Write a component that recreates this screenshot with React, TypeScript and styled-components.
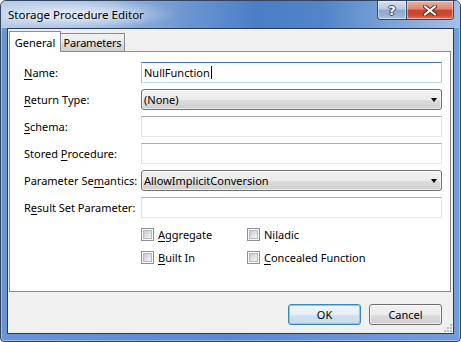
import React from 'react';
import styled, { createGlobalStyle } from 'styled-components';

const GlobalStyle = createGlobalStyle`
  html, body {
    margin: 0;
    padding: 0;
    background: #ffffff;
  }
  body {
    font-family: "Noto Sans", "Open Sans", sans-serif;
    font-size: 11px;
    color: #000000;
  }
  * {
    box-sizing: border-box;
  }
`;

const Window = styled.div`
  width: 461px;
  height: 342px;
  display: flex;
  flex-direction: column;
  border: 1px solid #34445e;
  border-radius: 6px 6px 4px 4px;
  overflow: hidden;
  background: linear-gradient(90deg, #6795d5 0%, #5a8bd1 50%, #739edb 100%);
  box-shadow: inset 0 0 0 1px rgba(255, 255, 255, 0.35);
`;

const TitleBar = styled.div`
  height: 27px;
  flex-shrink: 0;
  display: flex;
  align-items: flex-start;
  padding: 0 6px 0 7px;
  background:
    radial-gradient(ellipse 105px 15px at 72px 13px, rgba(255, 255, 255, 0.7), rgba(255, 255, 255, 0) 100%),
    linear-gradient(90deg, #b8cce8 0%, #a0bbe0 22%, #6893d0 42%, #4b7ec6 56%, #5384c8 70%, #7fa5da 86%, #a3c0e6 100%);
`;

const Caption = styled.span`
  margin-top: 6px;
  font-size: 11.5px;
  color: #000000;
  text-shadow: 0 0 6px rgba(255, 255, 255, 0.9);
`;

const CaptionButtons = styled.div`
  margin-left: auto;
  display: flex;
  height: 19px;
  border: 1px solid #3a4862;
  border-top: none;
  border-radius: 0 0 4px 4px;
  overflow: hidden;
`;

const CaptionButton = styled.div<{ $close?: boolean }>`
  width: ${({ $close }) => ($close ? '47px' : '28px')};
  height: 100%;
  display: flex;
  align-items: center;
  justify-content: center;
  border-left: ${({ $close }) => ($close ? '1px solid #3a4862' : 'none')};
  background: ${({ $close }) =>
    $close
      ? 'linear-gradient(180deg, #eab0a3 0%, #dd8471 45%, #c9432c 52%, #cc4a33 80%, #e07a64 100%)'
      : 'linear-gradient(180deg, #d6e1ef 0%, #b7c9e1 45%, #8ea7cb 52%, #98b0d2 80%, #b2c7e3 100%)'};
  box-shadow: inset 0 0 0 1px rgba(255, 255, 255, 0.45);
`;

const HelpGlyph = styled.span`
  font-family: "DejaVu Sans", sans-serif;
  font-weight: bold;
  font-size: 13px;
  color: #ffffff;
  line-height: 1;
  text-shadow: 0 0 1px #27354f, 1px 0 0 #3b4b68, -1px 0 0 #3b4b68, 0 1px 0 #3b4b68, 0 -1px 0 #3b4b68;
`;

const Client = styled.div`
  flex: 1;
  display: flex;
  flex-direction: column;
  margin: 0 6px 7px 6px;
  border: 1px solid #2a3a55;
  background: #f0f0f0;
  padding: 1px 2px 0 1px;
  position: relative;
`;

const TabStrip = styled.div`
  height: 21px;
  display: flex;
  align-items: flex-end;
`;

const Tab = styled.div<{ $active?: boolean; $width: number }>`
  width: ${({ $width }) => $width}px;
  height: ${({ $active }) => ($active ? '21px' : '18px')};
  margin-bottom: ${({ $active }) => ($active ? '-1px' : '0')};
  margin-left: ${({ $active }) => ($active ? '0' : '-1px')};
  padding-top: ${({ $active }) => ($active ? '1px' : '0')};
  border: 1px solid #898c95;
  border-bottom: none;
  display: flex;
  align-items: center;
  justify-content: center;
  white-space: nowrap;
  letter-spacing: ${({ $active }) => ($active ? '0' : '-0.2px')};
  background: ${({ $active }) =>
    $active ? '#ffffff' : 'linear-gradient(180deg, #f2f2f2 0%, #ebebeb 50%, #dddddd 51%, #cfcfcf 100%)'};
  position: relative;
  z-index: ${({ $active }) => ($active ? 2 : 1)};
`;

const Panel = styled.div`
  height: 241px;
  border: 1px solid #898c95;
  background: #ffffff;
  padding: 10px 8px 0 14px;
  position: relative;
  z-index: 1;
`;

const FormGrid = styled.div`
  display: grid;
  grid-template-columns: 117px 1fr;
  grid-auto-rows: 21px;
  row-gap: 6px;
  align-items: center;
`;

const Label = styled.label`
  white-space: nowrap;
`;

const Key = styled.span`
  text-decoration: underline;
  text-underline-offset: 2px;
`;

const Field = styled.div<{ $focused?: boolean }>`
  height: 21px;
  display: flex;
  align-items: center;
  padding-left: 2px;
  border: 1px solid;
  border-color: ${({ $focused }) =>
    $focused ? '#3d7bad #a4c9e3 #b7d9ed #a4c9e3' : '#abadb3 #e2e3ea #e3e9ef #dbdfe6'};
  background: #ffffff;
`;

const Caret = styled.span`
  width: 1px;
  height: 13px;
  margin-left: 1px;
  background: #000000;
`;

const Combo = styled.div`
  height: 21px;
  display: flex;
  align-items: center;
  padding: 0 4px 0 2px;
  border: 1px solid #707070;
  border-radius: 3px;
  background: linear-gradient(180deg, #f2f2f2 0%, #ebebeb 50%, #dddddd 51%, #cfcfcf 100%);
  box-shadow: inset 0 0 0 1px rgba(255, 255, 255, 0.6);
`;

const ComboText = styled.span`
  flex: 1;
`;

const Arrow = styled.span`
  width: 0;
  height: 0;
  border-left: 3.5px solid transparent;
  border-right: 3.5px solid transparent;
  border-top: 4px solid #000000;
`;

const Checks = styled.div`
  display: grid;
  grid-template-columns: 106px auto;
  grid-auto-rows: 17px;
  row-gap: 6px;
  margin: 8px 0 0 117px;
`;

const CheckRow = styled.label`
  display: flex;
  align-items: center;
  gap: 4px;
`;

const Box = styled.span`
  width: 13px;
  height: 13px;
  border: 1px solid #8f8f8f;
  background: #ffffff;
  padding: 1px;
  display: flex;

  &::after {
    content: '';
    flex: 1;
    background: linear-gradient(135deg, #c6c9ce 0%, #e2e3e5 55%, #f4f4f4 100%);
    border: 1px solid #b6b9bf;
  }
`;

const ButtonBar = styled.div`
  flex: 1;
  display: flex;
  justify-content: flex-end;
  align-items: flex-start;
  gap: 8px;
  padding: 12px 9px 0 0;
`;

const Button = styled.button<{ $default?: boolean }>`
  width: 73px;
  height: 21px;
  padding: 0;
  font-family: inherit;
  font-size: 11px;
  color: #000000;
  border: 1px solid ${({ $default }) => ($default ? '#3c86c0' : '#707070')};
  border-radius: 3px;
  background: ${({ $default }) =>
    $default
      ? 'linear-gradient(180deg, #eef6fb 0%, #e3eef6 50%, #d3e3ef 51%, #c6d9e8 100%)'
      : 'linear-gradient(180deg, #f2f2f2 0%, #ebebeb 50%, #dddddd 51%, #cfcfcf 100%)'};
  box-shadow: ${({ $default }) =>
    $default ? 'inset 0 0 0 1px #74d4f6' : 'inset 0 0 0 1px rgba(255, 255, 255, 0.6)'};
`;

const Grip = styled.svg`
  position: absolute;
  right: 1px;
  bottom: 1px;
`;

const fields = [
  { label: <><Key>N</Key>ame:</>, kind: 'name' },
  { label: <><Key>R</Key>eturn Type:</>, kind: 'combo', value: '(None)' },
  { label: <><Key>S</Key>chema:</>, kind: 'text' },
  { label: <>Stored <Key>P</Key>rocedure:</>, kind: 'text' },
  { label: <>Parameter Se<Key>m</Key>antics:</>, kind: 'combo', value: 'AllowImplicitConversion' },
  { label: <>R<Key>e</Key>sult Set Parameter:</>, kind: 'text' },
];

const checks = [
  <><Key>A</Key>ggregate</>,
  <>Ni<Key>l</Key>adic</>,
  <><Key>B</Key>uilt In</>,
  <><Key>C</Key>oncealed Function</>,
];

const App: React.FC = () => {
  return (
    <>
      <GlobalStyle />
      <Window>
        <TitleBar>
          <Caption>Storage Procedure Editor</Caption>
          <CaptionButtons>
            <CaptionButton>
              <HelpGlyph>?</HelpGlyph>
            </CaptionButton>
            <CaptionButton $close>
              <svg width="14" height="11" viewBox="0 0 14 11">
                <path d="M2 1.5 L12 9.5 M12 1.5 L2 9.5" stroke="#5a2a22" strokeWidth="4" strokeLinecap="square" />
                <path d="M2 1.5 L12 9.5 M12 1.5 L2 9.5" stroke="#ffffff" strokeWidth="2" strokeLinecap="square" />
              </svg>
            </CaptionButton>
          </CaptionButtons>
        </TitleBar>
        <Client>
          <TabStrip>
            <Tab $active $width={52}>General</Tab>
            <Tab $width={65}>Parameters</Tab>
          </TabStrip>
          <Panel>
            <FormGrid>
              {fields.map((f, i) => (
                <React.Fragment key={i}>
                  <Label>{f.label}</Label>
                  {f.kind === 'combo' ? (
                    <Combo>
                      <ComboText>{f.value}</ComboText>
                      <Arrow />
                    </Combo>
                  ) : f.kind === 'name' ? (
                    <Field $focused>
                      NullFunction
                      <Caret />
                    </Field>
                  ) : (
                    <Field />
                  )}
                </React.Fragment>
              ))}
            </FormGrid>
            <Checks>
              {checks.map((c, i) => (
                <CheckRow key={i}>
                  <Box />
                  <span>{c}</span>
                </CheckRow>
              ))}
            </Checks>
          </Panel>
          <ButtonBar>
            <Button $default>OK</Button>
            <Button>Cancel</Button>
          </ButtonBar>
          <Grip width="8" height="8" viewBox="0 0 8 8">
            {[
              [6, 0],
              [6, 3],
              [3, 3],
              [6, 6],
              [3, 6],
              [0, 6],
            ].map(([x, y], i) => (
              <rect key={i} x={x} y={y} width="2" height="2" fill="#b8bcc4" />
            ))}
          </Grip>
        </Client>
      </Window>
    </>
  );
};

export default App;
